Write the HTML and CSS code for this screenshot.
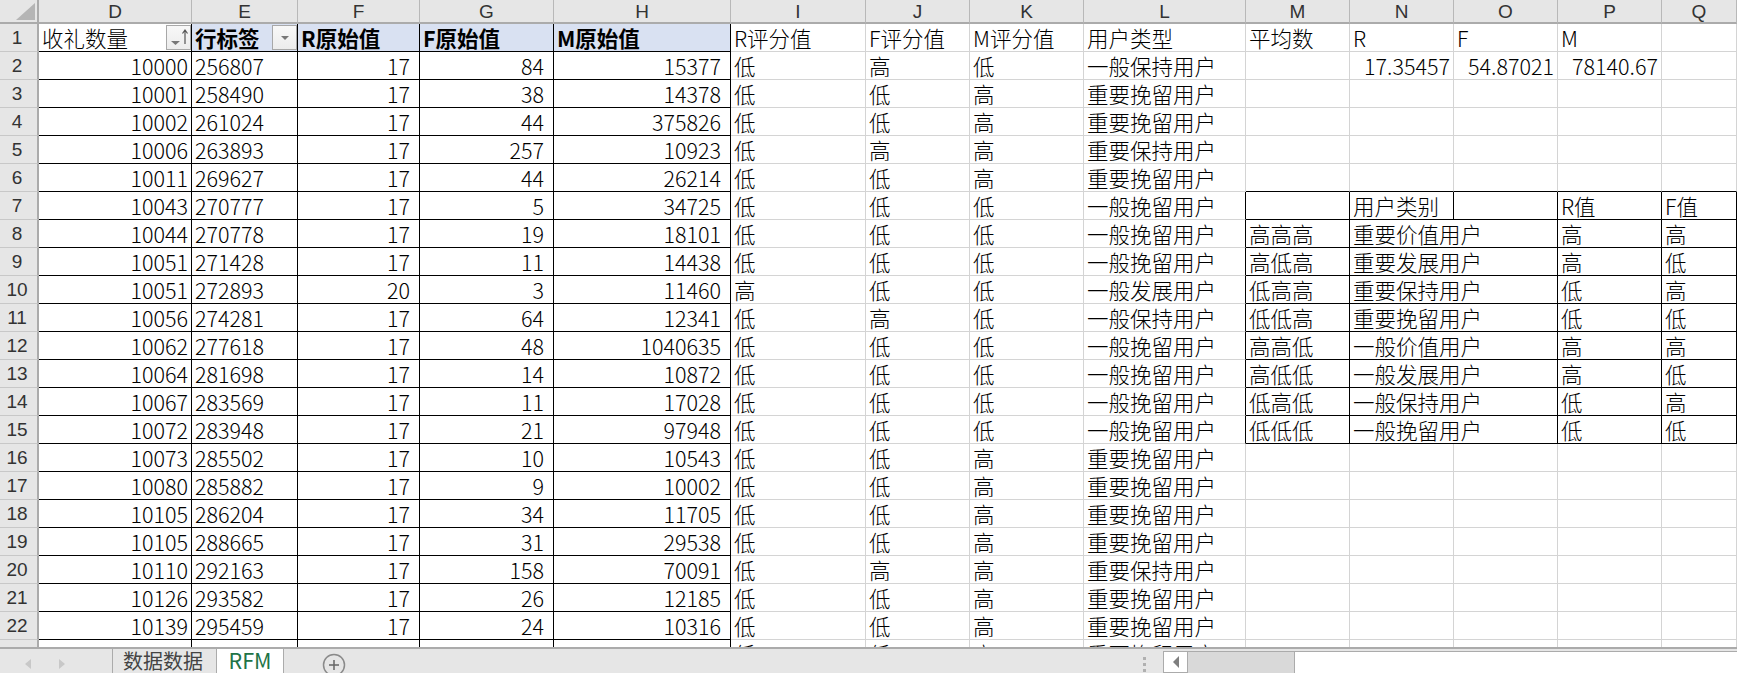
FILE: index.html
```html
<!DOCTYPE html>
<html lang="zh-CN">
<head>
<meta charset="utf-8">
<title>RFM</title>
<link rel="stylesheet" href="styles.css">
</head>
<body>
<div class="app">
<div class="sheet">
<div class="ch corner"><svg class="corner-mark" width="37" height="22" viewBox="0 0 37 22"><polygon points="35,3 35,20 16,20" fill="#b5b5b5"/></svg></div>
<div class="ch">D</div><div class="ch">E</div><div class="ch">F</div><div class="ch">G</div><div class="ch">H</div><div class="ch">I</div><div class="ch">J</div><div class="ch">K</div><div class="ch">L</div><div class="ch">M</div><div class="ch">N</div><div class="ch">O</div><div class="ch">P</div><div class="ch">Q</div>
<div class="rh">1</div><div class="c b">收礼数量<span class="fbtn"><svg width="23" height="23" viewBox="0 0 23 23"><polygon points="4,15 13,15 8.500,19" fill="#777"/><path d="M18 18V4M15.500 7.500L18 4l2.500 3.500" stroke="#555" stroke-width="1.200" fill="none"/></svg></span></div><div class="c b hd">行标签<span class="fbtn"><svg width="23" height="23" viewBox="0 0 23 23"><polygon points="8,10 16,10 12,14" fill="#777"/></svg></span></div><div class="c b hd">R原始值</div><div class="c b hd">F原始值</div><div class="c b hd">M原始值</div><div class="c">R评分值</div><div class="c">F评分值</div><div class="c">M评分值</div><div class="c">用户类型</div><div class="c">平均数</div><div class="c">R</div><div class="c">F</div><div class="c">M</div><div class="c"></div>
<div class="rh">2</div><div class="c b n">10000</div><div class="c b">256807</div><div class="c b n p">17</div><div class="c b n p">84</div><div class="c b n p">15377</div><div class="c">低</div><div class="c">高</div><div class="c">低</div><div class="c">一般保持用户</div><div class="c"></div><div class="c n">17.35457</div><div class="c n">54.87021</div><div class="c n">78140.67</div><div class="c"></div>
<div class="rh">3</div><div class="c b n">10001</div><div class="c b">258490</div><div class="c b n p">17</div><div class="c b n p">38</div><div class="c b n p">14378</div><div class="c">低</div><div class="c">低</div><div class="c">高</div><div class="c">重要挽留用户</div><div class="c"></div><div class="c"></div><div class="c"></div><div class="c"></div><div class="c"></div>
<div class="rh">4</div><div class="c b n">10002</div><div class="c b">261024</div><div class="c b n p">17</div><div class="c b n p">44</div><div class="c b n p">375826</div><div class="c">低</div><div class="c">低</div><div class="c">高</div><div class="c">重要挽留用户</div><div class="c"></div><div class="c"></div><div class="c"></div><div class="c"></div><div class="c"></div>
<div class="rh">5</div><div class="c b n">10006</div><div class="c b">263893</div><div class="c b n p">17</div><div class="c b n p">257</div><div class="c b n p">10923</div><div class="c">低</div><div class="c">高</div><div class="c">高</div><div class="c">重要保持用户</div><div class="c"></div><div class="c"></div><div class="c"></div><div class="c"></div><div class="c"></div>
<div class="rh">6</div><div class="c b n">10011</div><div class="c b">269627</div><div class="c b n p">17</div><div class="c b n p">44</div><div class="c b n p">26214</div><div class="c">低</div><div class="c">低</div><div class="c">高</div><div class="c">重要挽留用户</div><div class="c tb"></div><div class="c tb"></div><div class="c tb"></div><div class="c tb"></div><div class="c tb"></div>
<div class="rh">7</div><div class="c b n">10043</div><div class="c b">270777</div><div class="c b n p">17</div><div class="c b n p">5</div><div class="c b n p">34725</div><div class="c">低</div><div class="c">低</div><div class="c">低</div><div class="c lb">一般挽留用户</div><div class="c b"></div><div class="c b">用户类别</div><div class="c b"></div><div class="c b">R值</div><div class="c b">F值</div>
<div class="rh">8</div><div class="c b n">10044</div><div class="c b">270778</div><div class="c b n p">17</div><div class="c b n p">19</div><div class="c b n p">18101</div><div class="c">低</div><div class="c">低</div><div class="c">低</div><div class="c lb">一般挽留用户</div><div class="c b">高高高</div><div class="c b span2">重要价值用户</div><div class="c b">高</div><div class="c b">高</div>
<div class="rh">9</div><div class="c b n">10051</div><div class="c b">271428</div><div class="c b n p">17</div><div class="c b n p">11</div><div class="c b n p">14438</div><div class="c">低</div><div class="c">低</div><div class="c">低</div><div class="c lb">一般挽留用户</div><div class="c b">高低高</div><div class="c b span2">重要发展用户</div><div class="c b">高</div><div class="c b">低</div>
<div class="rh">10</div><div class="c b n">10051</div><div class="c b">272893</div><div class="c b n p">20</div><div class="c b n p">3</div><div class="c b n p">11460</div><div class="c">高</div><div class="c">低</div><div class="c">低</div><div class="c lb">一般发展用户</div><div class="c b">低高高</div><div class="c b span2">重要保持用户</div><div class="c b">低</div><div class="c b">高</div>
<div class="rh">11</div><div class="c b n">10056</div><div class="c b">274281</div><div class="c b n p">17</div><div class="c b n p">64</div><div class="c b n p">12341</div><div class="c">低</div><div class="c">高</div><div class="c">低</div><div class="c lb">一般保持用户</div><div class="c b">低低高</div><div class="c b span2">重要挽留用户</div><div class="c b">低</div><div class="c b">低</div>
<div class="rh">12</div><div class="c b n">10062</div><div class="c b">277618</div><div class="c b n p">17</div><div class="c b n p">48</div><div class="c b n p">1040635</div><div class="c">低</div><div class="c">低</div><div class="c">低</div><div class="c lb">一般挽留用户</div><div class="c b">高高低</div><div class="c b span2">一般价值用户</div><div class="c b">高</div><div class="c b">高</div>
<div class="rh">13</div><div class="c b n">10064</div><div class="c b">281698</div><div class="c b n p">17</div><div class="c b n p">14</div><div class="c b n p">10872</div><div class="c">低</div><div class="c">低</div><div class="c">低</div><div class="c lb">一般挽留用户</div><div class="c b">高低低</div><div class="c b span2">一般发展用户</div><div class="c b">高</div><div class="c b">低</div>
<div class="rh">14</div><div class="c b n">10067</div><div class="c b">283569</div><div class="c b n p">17</div><div class="c b n p">11</div><div class="c b n p">17028</div><div class="c">低</div><div class="c">低</div><div class="c">低</div><div class="c lb">一般挽留用户</div><div class="c b">低高低</div><div class="c b span2">一般保持用户</div><div class="c b">低</div><div class="c b">高</div>
<div class="rh">15</div><div class="c b n">10072</div><div class="c b">283948</div><div class="c b n p">17</div><div class="c b n p">21</div><div class="c b n p">97948</div><div class="c">低</div><div class="c">低</div><div class="c">低</div><div class="c lb">一般挽留用户</div><div class="c b">低低低</div><div class="c b span2">一般挽留用户</div><div class="c b">低</div><div class="c b">低</div>
<div class="rh">16</div><div class="c b n">10073</div><div class="c b">285502</div><div class="c b n p">17</div><div class="c b n p">10</div><div class="c b n p">10543</div><div class="c">低</div><div class="c">低</div><div class="c">高</div><div class="c">重要挽留用户</div><div class="c"></div><div class="c"></div><div class="c"></div><div class="c"></div><div class="c"></div>
<div class="rh">17</div><div class="c b n">10080</div><div class="c b">285882</div><div class="c b n p">17</div><div class="c b n p">9</div><div class="c b n p">10002</div><div class="c">低</div><div class="c">低</div><div class="c">高</div><div class="c">重要挽留用户</div><div class="c"></div><div class="c"></div><div class="c"></div><div class="c"></div><div class="c"></div>
<div class="rh">18</div><div class="c b n">10105</div><div class="c b">286204</div><div class="c b n p">17</div><div class="c b n p">34</div><div class="c b n p">11705</div><div class="c">低</div><div class="c">低</div><div class="c">高</div><div class="c">重要挽留用户</div><div class="c"></div><div class="c"></div><div class="c"></div><div class="c"></div><div class="c"></div>
<div class="rh">19</div><div class="c b n">10105</div><div class="c b">288665</div><div class="c b n p">17</div><div class="c b n p">31</div><div class="c b n p">29538</div><div class="c">低</div><div class="c">低</div><div class="c">高</div><div class="c">重要挽留用户</div><div class="c"></div><div class="c"></div><div class="c"></div><div class="c"></div><div class="c"></div>
<div class="rh">20</div><div class="c b n">10110</div><div class="c b">292163</div><div class="c b n p">17</div><div class="c b n p">158</div><div class="c b n p">70091</div><div class="c">低</div><div class="c">高</div><div class="c">高</div><div class="c">重要保持用户</div><div class="c"></div><div class="c"></div><div class="c"></div><div class="c"></div><div class="c"></div>
<div class="rh">21</div><div class="c b n">10126</div><div class="c b">293582</div><div class="c b n p">17</div><div class="c b n p">26</div><div class="c b n p">12185</div><div class="c">低</div><div class="c">低</div><div class="c">高</div><div class="c">重要挽留用户</div><div class="c"></div><div class="c"></div><div class="c"></div><div class="c"></div><div class="c"></div>
<div class="rh">22</div><div class="c b n">10139</div><div class="c b">295459</div><div class="c b n p">17</div><div class="c b n p">24</div><div class="c b n p">10316</div><div class="c">低</div><div class="c">低</div><div class="c">高</div><div class="c">重要挽留用户</div><div class="c"></div><div class="c"></div><div class="c"></div><div class="c"></div><div class="c"></div>
<div class="rh"></div><div class="c b"></div><div class="c b"></div><div class="c b"></div><div class="c b"></div><div class="c b"></div><div class="c">低</div><div class="c">低</div><div class="c">高</div><div class="c">重要挽留用户</div><div class="c"></div><div class="c"></div><div class="c"></div><div class="c"></div><div class="c"></div>
</div>
<div class="tabbar">
<div class="nav"><svg width="100" height="24" viewBox="0 0 100 24"><polygon points="31,10 25,15 31,20" fill="#c8c8c8"/><polygon points="59,10 65,15 59,20" fill="#c8c8c8"/></svg></div>
<div class="tab">数据数据</div>
<div class="tab active">RFM</div>
<svg class="add" width="24" height="24" viewBox="0 0 24 24"><circle cx="12" cy="12" r="10.500" fill="none" stroke="#8a8a8a" stroke-width="1.500"/><path d="M12 7v10M7 12h10" stroke="#666" stroke-width="1.500"/></svg>
<div class="spacer"></div>
<div class="dots"></div>
<div class="hscroll"><div class="arrow"><svg width="8" height="12" viewBox="0 0 8 12"><polygon points="7,0 1,6 7,12" fill="#7f7f7f"/></svg></div><div class="thumb"></div><div class="track"></div></div>
</div>
</div>
</body>
</html>
```
FILE: styles.css
```css
* { box-sizing: border-box; }
html, body { margin: 0; height: 100%; overflow: hidden; background: #fff; }
.app { width: 1737px; height: 673px; display: flex; flex-direction: column; font-family: "Noto Sans CJK SC", "Liberation Sans", sans-serif; font-size: 21.5px; font-weight: 300; color: #000; }
.sheet { height: 647px; overflow: hidden; display: grid; grid-template-columns: 39px 153px 106px 122px 134px 177px 135px 104px 114px 162px 104px 104px 104px 104px 75px; grid-template-rows: 24px; grid-auto-rows: 28px; flex: none; }
.ch { background: #e6e6e6; color: #333; font-family: "Liberation Sans", sans-serif; font-size: 19px; font-weight: 400; border-right: 1px solid #b8b8b8; border-bottom: 2px solid #ababab; display: flex; align-items: center; justify-content: center; line-height: 1; }
.ch.corner { display: block; border-right: 2px solid #ababab; }
.corner-mark { display: block; }
.rh { background: #e6e6e6; color: #333; font-family: "Liberation Sans", sans-serif; font-size: 19px; font-weight: 400; border-right: 2px solid #ababab; border-bottom: 1px solid #c8c8c8; padding-right: 3px; display: flex; align-items: center; justify-content: center; line-height: 1; }
.c { border-right: 1px solid #d4d4d4; border-bottom: 1px solid #d4d4d4; padding: 1px 3px 0; white-space: nowrap; line-height: 1; display: flex; align-items: center; min-width: 0; position: relative; }
.c.b { border-right-color: #000; border-bottom-color: #000; }
.c.tb { border-bottom-color: #000; }
.c.lb { border-right-color: #000; }
.n { justify-content: flex-end; }
.c.p { padding-right: 9px; }
.hd { background: #d9e1f2; font-weight: 700; }
.span2 { grid-column: span 2; }
.fbtn { position: absolute; right: 0; top: 1px; width: 25px; height: 25px; background: linear-gradient(#f8f8f8, #ececec); border: 1px solid #a8a8a8; display: flex; }
.fbtn svg { display: block; }
.tabbar { height: 26px; flex: none; overflow: hidden; background: #e6e6e6; border-top: 2px solid #ababab; display: flex; align-items: stretch; color: #444; font-size: 20px; font-weight: 400; }
.nav { width: 113px; flex: none; border-right: 1px solid #ababab; }
.nav svg { display: block; }
.tab { width: 104px; flex: none; display: flex; align-items: center; justify-content: center; padding-right: 3px; line-height: 1; border-right: 1px solid #ababab; }
.tab.active { width: 67px; padding-right: 0; background: #fff; color: #217346; font-size: 21.5px; margin-top: -2px; }
.add { margin: 4px 0 0 38px; flex: none; }
.spacer { flex: 1; }
.dots { width: 3px; flex: none; margin: 8px 17px 0 0; background: repeating-linear-gradient(#b0b0b0 0 3px, transparent 3px 6px); }
.hscroll { width: 574px; flex: none; display: flex; margin-top: 2px; border-top: 1px solid #ababab; }
.arrow { width: 25px; background: #fff; border: 1px solid #ababab; border-top: 0; display: flex; align-items: center; justify-content: center; }
.thumb { width: 107px; background: #d9d9d9; border-right: 1px solid #ababab; }
.track { flex: 1; background: #fff; }
```
